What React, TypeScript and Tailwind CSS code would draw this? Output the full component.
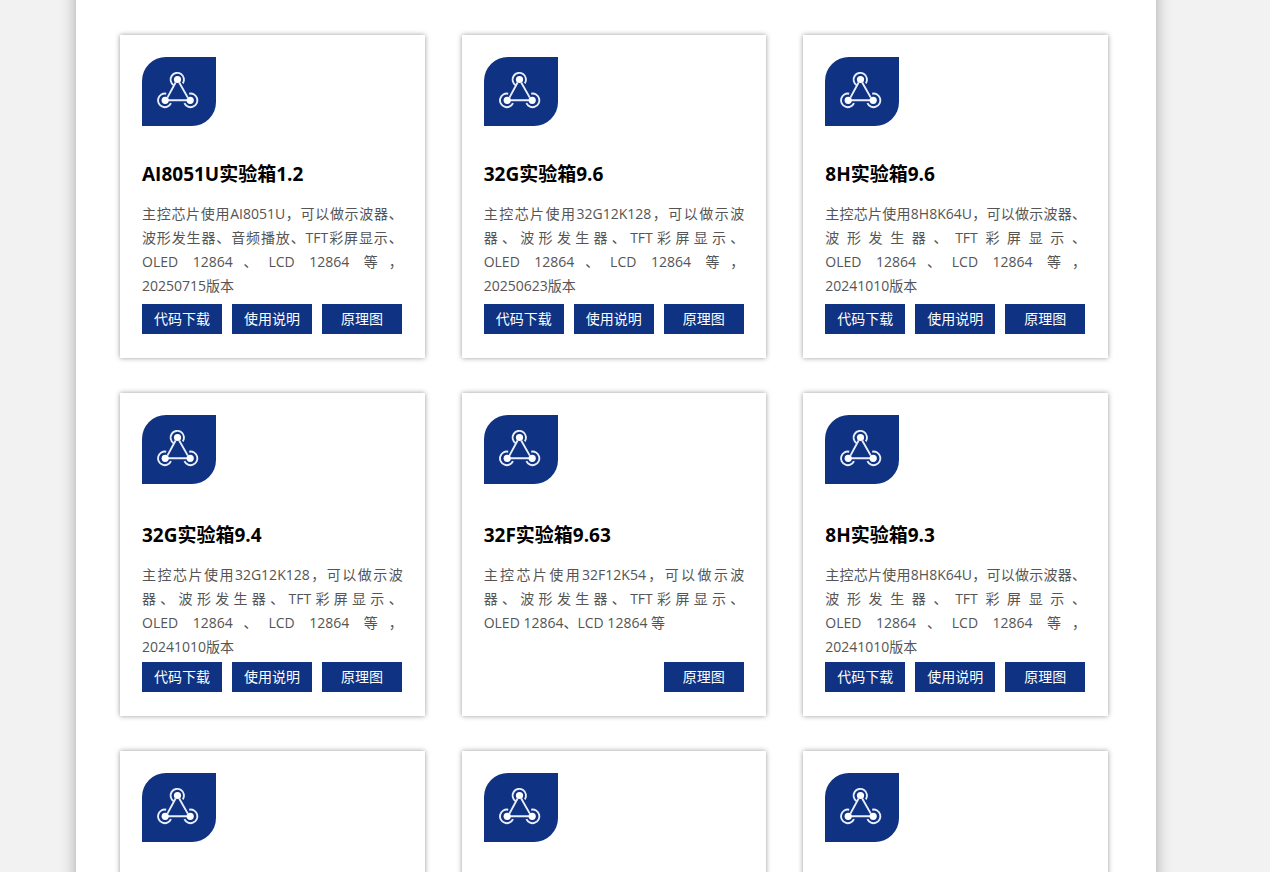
type Kit = {
  name: string;
  desc: string[];
  links: string[];
};

const allLinks = ["代码下载", "使用说明", "原理图"];

const firstRow: Kit[] = [
  {
    name: "AI8051U实验箱1.2",
    desc: ["主控芯片使用AI8051U，可以做示波器、", "波形发生器、音频播放、TFT彩屏显示、", "OLED 12864、LCD 12864 等，", "20250715版本"],
    links: allLinks,
  },
  {
    name: "32G实验箱9.6",
    desc: ["主控芯片使用32G12K128，可以做示波", "器、波形发生器、TFT彩屏显示、", "OLED 12864、LCD 12864 等，", "20250623版本"],
    links: allLinks,
  },
  {
    name: "8H实验箱9.6",
    desc: ["主控芯片使用8H8K64U，可以做示波器、", "波形发生器、TFT彩屏显示、", "OLED 12864、LCD 12864 等，", "20241010版本"],
    links: allLinks,
  },
];

const secondRow: Kit[] = [
  {
    name: "32G实验箱9.4",
    desc: ["主控芯片使用32G12K128，可以做示波", "器、波形发生器、TFT彩屏显示、", "OLED 12864、LCD 12864 等，", "20241010版本"],
    links: allLinks,
  },
  {
    name: "32F实验箱9.63",
    desc: ["主控芯片使用32F12K54，可以做示波", "器、波形发生器、TFT彩屏显示、", "OLED 12864、LCD 12864 等"],
    links: ["原理图"],
  },
  {
    name: "8H实验箱9.3",
    desc: ["主控芯片使用8H8K64U，可以做示波器、", "波形发生器、TFT彩屏显示、", "OLED 12864、LCD 12864 等，", "20241010版本"],
    links: allLinks,
  },
];

const KitIcon = () => (
  <div className="h-[69px] w-[74px] shrink-0 rounded-tl-3xl rounded-br-3xl bg-[#103282]">
    <svg viewBox="0 0 74 69" className="h-full w-full" fill="none" stroke="#e8eefc" strokeWidth="1.9" aria-hidden="true">
      <path d="M31.6 28.2A6.7 6.7 0 1 1 40.8 26.4" />
      <path d="M24.2 36.7A6.8 6.8 0 1 0 29 46.2" />
      <path d="M42.4 46.2A6.8 6.8 0 1 0 47.2 36.7" />
      <path d="M33.6 25.5L25.4 40.6M37.2 25.5L45.8 40.6M24 43.3H47" />
      <g fill="#fff" stroke="none">
        <circle cx="35.5" cy="22.5" r="3.6" />
        <circle cx="23.2" cy="43.3" r="3.6" />
        <circle cx="48.2" cy="43.3" r="3.6" />
      </g>
    </svg>
  </div>
);

const KitCard = ({ kit, titleClass }: { kit?: Kit; titleClass?: string }) => (
  <article className="flex min-h-[323px] flex-col bg-white px-[22px] pt-[22px] pb-6 shadow-[0_0_5px_#999]">
    <KitIcon />
    {kit && (
      <>
        <h3 className={`${titleClass} text-[19px] leading-6 font-bold text-black`}>{kit.name}</h3>
        <p className="mt-4 text-sm leading-6 text-[#555]">
          {kit.desc.map((line, i) => (
            <span
              key={line}
              className={i < 2 || kit.desc[i + 1] ? "block text-justify [text-align-last:justify]" : "block"}
            >
              {line}
            </span>
          ))}
        </p>
        <div className="mt-auto flex w-[260px] justify-end gap-[10px]">
          {kit.links.map((link) => (
            <a key={link} href="#" className="w-20 bg-[#103282] text-center text-sm leading-[30px] text-white">
              {link}
            </a>
          ))}
        </div>
      </>
    )}
  </article>
);

const App = () => {
  return (
    <div className="h-screen overflow-hidden bg-[#f2f2f2] pr-[38px] font-['Open_Sans','Noto_Sans_CJK_SC',sans-serif]">
      <main className="mx-auto -mt-9 max-w-[1080px] bg-white pt-[71px] pr-12 pb-9 pl-11 shadow-[0_0_15px_rgba(0,0,0,0.3)]">
        <div className="grid grid-cols-3 gap-x-[37px] gap-y-[35px]">
          {firstRow.map((kit) => (
            <KitCard key={kit.name} kit={kit} titleClass="mt-9" />
          ))}
          {secondRow.map((kit) => (
            <KitCard key={kit.name} kit={kit} titleClass="mt-[39px]" />
          ))}
          <KitCard />
          <KitCard />
          <KitCard />
        </div>
      </main>
    </div>
  );
};

export default App;
